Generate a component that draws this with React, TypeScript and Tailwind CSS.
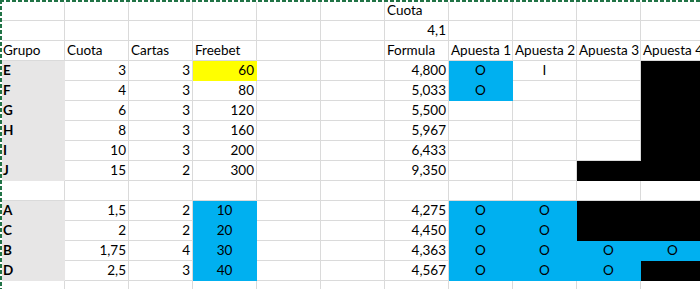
import React from "react";

type Fill = "gray" | "yellow" | "blue" | "black";
type Cell = { t?: string; a?: "l" | "r" | "c"; f?: Fill; b?: boolean };

const fillClass: Record<Fill, string> = {
  gray: "bg-[#e7e6e6] border-[#e7e6e6]",
  yellow: "bg-[#ffff00] border-[#ffff00]",
  blue: "bg-[#00b0f0] border-[#00b0f0]",
  black: "bg-black border-black",
};

const alignClass = { l: "text-left", r: "text-right", c: "text-center" };

const N = 11;
const e: Cell = {};
const g = (t: string): Cell => ({ t, f: "gray", b: true });
const r = (t: string, f?: Fill): Cell => ({ t, a: "r", f });
const c = (t: string, f?: Fill): Cell => ({ t, a: "c", f });
const l = (t: string): Cell => ({ t, a: "l" });
const blk: Cell = { f: "black" };
const blue = (t: string): Cell => c(t, "blue");

const rows: Cell[][] = [
  [e, e, e, e, e, e, l("Cuota")],
  [e, e, e, e, e, e, r("4,1")],
  [l("Grupo"), l("Cuota"), l("Cartas"), l("Freebet"), e, e, l("Formula"), l("Apuesta 1"), l("Apuesta 2"), l("Apuesta 3"), l("Apuesta 4")],
  [g("E"), r("3"), r("3"), r("60", "yellow"), e, e, r("4,800"), blue("O"), c("I"), e, blk],
  [g("F"), r("4"), r("3"), r("80"), e, e, r("5,033"), blue("O"), e, e, blk],
  [g("G"), r("6"), r("3"), r("120"), e, e, r("5,500"), e, e, e, blk],
  [g("H"), r("8"), r("3"), r("160"), e, e, r("5,967"), e, e, e, blk],
  [g("I"), r("10"), r("3"), r("200"), e, e, r("6,433"), e, e, e, blk],
  [g("J"), r("15"), r("2"), r("300"), e, e, r("9,350"), e, e, blk, blk],
  [],
  [g("A"), r("1,5"), r("2"), blue("10"), e, e, r("4,275"), blue("O"), blue("O"), blk, blk],
  [g("C"), r("2"), r("2"), blue("20"), e, e, r("4,450"), blue("O"), blue("O"), blk, blk],
  [g("B"), r("1,75"), r("4"), blue("30"), e, e, r("4,363"), blue("O"), blue("O"), blue("O"), blue("O")],
  [g("D"), r("2,5"), r("3"), blue("40"), e, e, r("4,567"), blue("O"), blue("O"), blue("O"), blk],
  [],
];

function SheetCell({ cell }: { cell: Cell }) {
  const fill = cell.f ? fillClass[cell.f] : "bg-white border-[#dadada]";
  return (
    <div
      className={`h-5 w-16 shrink-0 border-r border-b px-[2px] leading-[19px] whitespace-nowrap ${fill} ${
        alignClass[cell.a ?? "l"]
      } ${cell.b ? "font-bold" : ""}`}
    >
      {cell.t}
    </div>
  );
}

export default function App() {
  return (
    <div className="relative h-[289px] w-[700px] overflow-hidden bg-white pt-px pl-px font-['Lato',sans-serif] text-[13.5px] text-black">
      {rows.map((row, i) => (
        <div key={i} className="flex">
          {Array.from({ length: N }, (_, j) => (
            <SheetCell key={j} cell={row[j] ?? e} />
          ))}
        </div>
      ))}

      {/* copy marquee along the top and left edges */}
      <div className="absolute top-0 left-0 h-0.5 w-full bg-[repeating-linear-gradient(90deg,#217346_0px,#217346_4px,#ffffff_4px,#ffffff_6px)]" />
      <div className="absolute top-0 left-0 h-full w-0.5 bg-[repeating-linear-gradient(180deg,#217346_0px,#217346_4px,#ffffff_4px,#ffffff_6px)]" />
    </div>
  );
}
